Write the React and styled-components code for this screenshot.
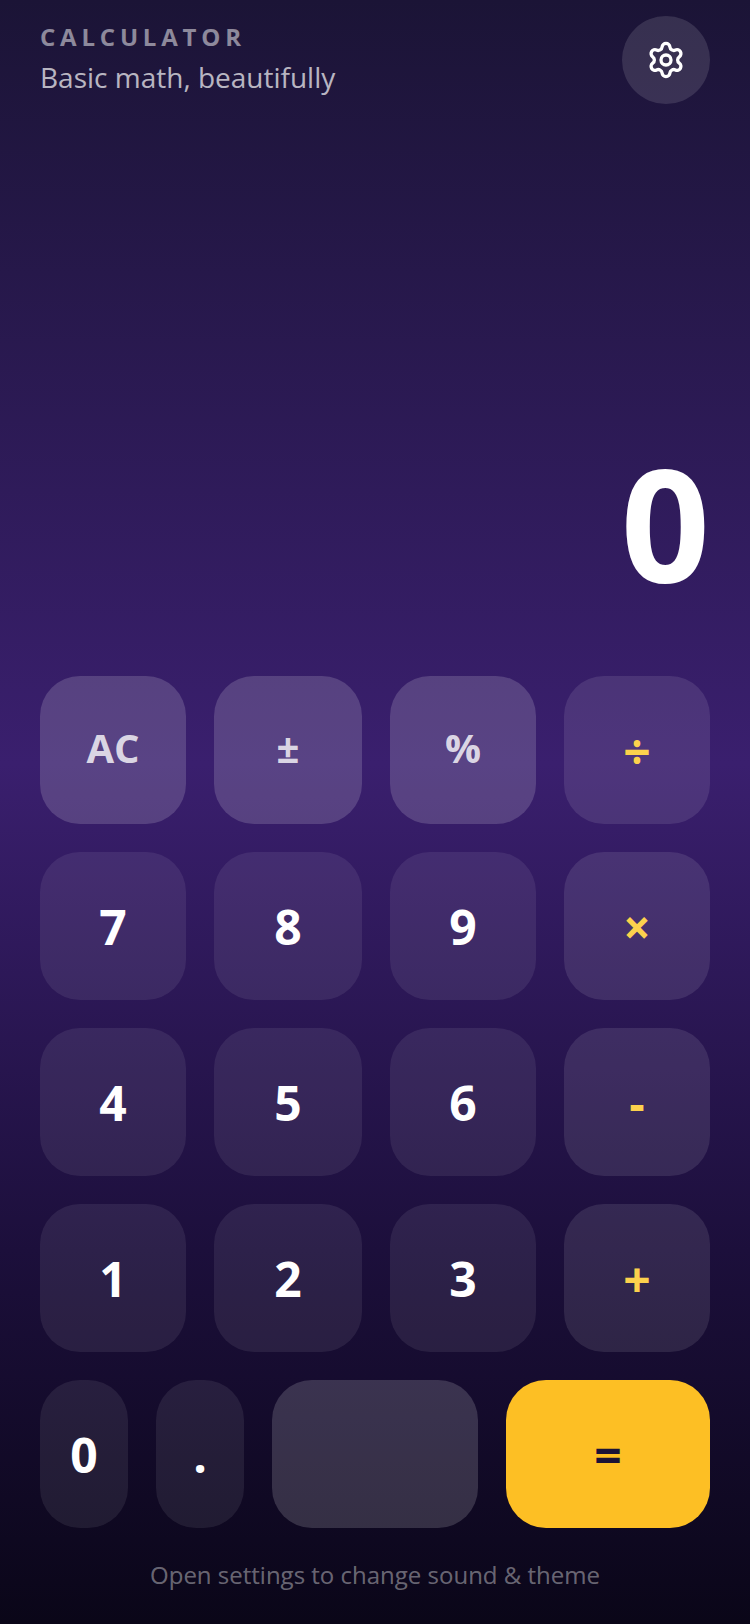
import styled, { createGlobalStyle } from "styled-components";
import { Settings } from "lucide-react";

const GlobalStyle = createGlobalStyle`
  html, body { margin: 0; padding: 0; }
  body { font-family: "Open Sans", "Noto Sans", sans-serif; }
`;

const ROWS = [
  [["AC", "fn"], ["±", "fn"], ["%", "fn"], ["÷", "op"]],
  [["7", "num"], ["8", "num"], ["9", "num"], ["×", "op"]],
  [["4", "num"], ["5", "num"], ["6", "num"], ["-", "op"]],
  [["1", "num"], ["2", "num"], ["3", "num"], ["+", "op"]],
];

export default function App() {
  return (
    <Screen>
      <GlobalStyle />
      <Header>
        <TitleBlock>
          <Eyebrow>CALCULATOR</Eyebrow>
          <Tagline>Basic math, beautifully</Tagline>
        </TitleBlock>
        <SettingsButton aria-label="Settings">
          <Settings size={40} strokeWidth={2} />
        </SettingsButton>
      </Header>
      <Display>0</Display>
      <Keypad>
        {ROWS.map((row, i) => (
          <KeyRow key={i}>
            {row.map(([label, kind]) => (
              <Key key={label} $kind={kind}>{label}</Key>
            ))}
          </KeyRow>
        ))}
        <BottomRow>
          <Key $kind="num">0</Key>
          <Key $kind="num">.</Key>
          <Key $kind="blank" />
          <Key $kind="equals">=</Key>
        </BottomRow>
      </Keypad>
      <Hint>Open settings to change sound &amp; theme</Hint>
    </Screen>
  );
}

const Screen = styled.div`
  width: 750px;
  height: 1624px;
  box-sizing: border-box;
  padding: 16px 40px 32px;
  display: flex;
  flex-direction: column;
  background: linear-gradient(180deg, #1b1436 0%, #3a1f6e 47%, #1c0f3b 77%, #0a0618 100%);
  overflow: hidden;
`;

const Header = styled.header`
  display: flex;
  justify-content: space-between;
  align-items: flex-start;
`;

const TitleBlock = styled.div`
  padding-top: 4px;
`;

const Eyebrow = styled.div`
  font-size: 24px;
  line-height: 34px;
  font-weight: 700;
  letter-spacing: 4.8px;
  color: rgba(255, 255, 255, 0.5);
`;

const Tagline = styled.div`
  margin-top: 4px;
  font-size: 28px;
  line-height: 38px;
  color: rgba(255, 255, 255, 0.7);
`;

const SettingsButton = styled.button`
  width: 88px;
  height: 88px;
  border: 0;
  padding: 0;
  border-radius: 50%;
  display: flex;
  align-items: center;
  justify-content: center;
  color: #fff;
  background: rgba(255, 255, 255, 0.12);
`;

const Display = styled.div`
  flex: 1;
  display: flex;
  align-items: flex-end;
  justify-content: flex-end;
  padding-bottom: 76px;
  font-size: 156px;
  line-height: 1;
  font-weight: 700;
  color: #fff;
`;

const Keypad = styled.div`
  display: flex;
  flex-direction: column;
  gap: 28px;
`;

const KeyRow = styled.div`
  display: grid;
  grid-template-columns: 146px 148px 146px 146px;
  gap: 28px;
`;

const BottomRow = styled.div`
  display: grid;
  grid-template-columns: 88px 88px 206px 204px;
  gap: 28px;
`;

const keyBg = {
  fn: "rgba(255, 255, 255, 0.16)",
  num: "rgba(255, 255, 255, 0.08)",
  op: "rgba(255, 255, 255, 0.1)",
  blank: "rgba(255, 255, 255, 0.16)",
  equals: "#fdbf24",
};

const keyColor = {
  fn: "rgba(255, 255, 255, 0.8)",
  num: "#fff",
  op: "#fcd14d",
  blank: "#fff",
  equals: "#1b1336",
};

const Key = styled.button`
  height: 148px;
  border: 0;
  padding: 0 0 ${(p) => (p.$kind === "fn" ? "5px" : "0")};
  border-radius: 40px;
  font-family: inherit;
  font-size: ${(p) => (p.$kind === "fn" ? "40px" : "48px")};
  font-weight: 700;
  background: ${(p) => keyBg[p.$kind]};
  color: ${(p) => keyColor[p.$kind]};
`;

const Hint = styled.div`
  margin-top: 30px;
  text-align: center;
  font-size: 24px;
  line-height: 34px;
  color: rgba(255, 255, 255, 0.4);
`;
